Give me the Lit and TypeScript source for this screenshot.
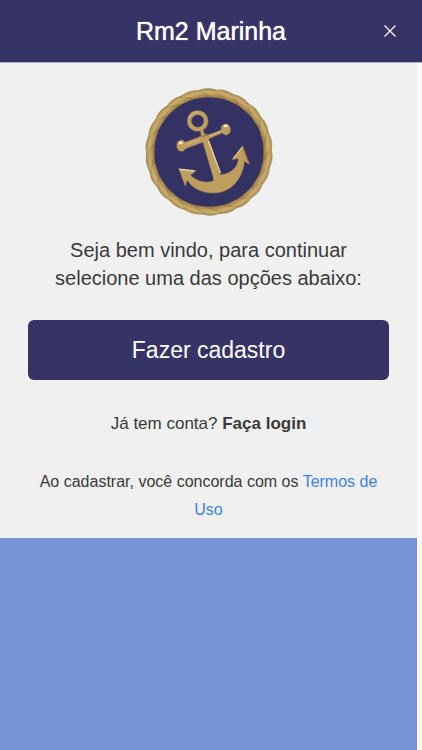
import { LitElement, html, svg, css } from "lit";
import { customElement } from "lit/decorators.js";

const STRAND_COUNT = 22;
const STRANDS = Array.from({ length: STRAND_COUNT }, (_, i) => (i * 360) / STRAND_COUNT);

@customElement("anchor-badge")
class AnchorBadge extends LitElement {
  static styles = css`
    :host {
      display: block;
      width: 128px;
      height: 128px;
    }
    .art {
      display: block;
      width: 100%;
      height: 100%;
    }
  `;

  render() {
    return html`
      <svg class="art" viewBox="20 19 384 384" role="img" aria-label="Âncora">
        <defs>
          <linearGradient id="strand" x1="0" y1="0" x2="0" y2="1">
            <stop offset="0" stop-color="#a88a50" />
            <stop offset="0.4" stop-color="#ccae6e" />
            <stop offset="1" stop-color="#9a7b43" />
          </linearGradient>
        </defs>
        <circle cx="212" cy="211" r="172" fill="#343263" />
        <circle cx="212" cy="211" r="176" fill="none" stroke="#a98a50" stroke-width="23" />
        ${STRANDS.map(
          (angle) => svg`<path transform="rotate(${angle} 212 211)"
            d="M174 31 C188 19 216 18 232 25 C245 31 252 40 258 49 C242 51 218 47 203 39 C191 33 183 31 174 31 Z"
            fill="url(#strand)" stroke="#80632f" stroke-opacity="0.45" stroke-width="2" />`
        )}
        <g fill="#be9e5f" stroke="#544059" stroke-width="2" stroke-linejoin="round">
          <path
            d="M120 260 L175 266 L158 281 C175 298 202 305 224 297 C225 291 224 287 222 281 L193 183
               L141 202 C136 214 119 212 115 198 C111 183 122 171 134 175 L140 181 L188 163 L185 149
               C164 153 146 138 146 118 C146 100 160 86 178 86 C196 86 210 100 210 118
               C210 131 204 140 195 145 L200 157 L212 158 L248 144 C245 130 258 122 269 128
               C283 137 279 159 264 161 C259 162 255 158 252 155 L212 172 L246 278
               C272 277 298 260 299 231 L278 236 L313 191 L335 250 L319 240
               C315 290 278 335 226 335 C188 335 160 318 147 297 L141 317 Z
               M178 100 A18 18 0 1 0 178 136 A18 18 0 1 0 178 100 Z"
            fill-rule="evenodd"
          />
        </g>
        <g fill="none" stroke="#e9d6a4" stroke-linecap="round" stroke-width="3">
          <path d="M211 180 L246 273" stroke-width="4" />
          <path d="M124 263 L167 268" stroke-width="4" />
          <path d="M311 197 L286 230" />
          <path d="M145 188 L184 174" stroke-opacity="0.5" />
          <path d="M216 162 L246 150" stroke-opacity="0.5" />
          <path d="M153 108 C158 96 168 91 178 91" stroke-opacity="0.5" />
        </g>
        <g fill="none" stroke="#927238" stroke-width="3">
          <path d="M191 165 L213 158" />
          <path d="M314 197 L330 241" />
        </g>
        <ellipse cx="127" cy="184" rx="6" ry="4" fill="#fff3d2" />
        <ellipse cx="262" cy="133" rx="6" ry="4" fill="#fff3d2" />
      </svg>
    `;
  }
}

@customElement("app-root")
class AppRoot extends LitElement {
  static styles = css`
    :host {
      display: flex;
      flex-direction: column;
      min-height: 100vh;
      background: #f9f9f9;
      color: #3a3a3a;
      font-family: "Liberation Sans", Arial, sans-serif;
    }
    .bar {
      display: grid;
      grid-template-columns: 48px 1fr 48px;
      align-items: center;
      height: 62px;
      padding: 0 8px;
      background: #363466;
      border-bottom: 1px solid #b3aec8;
      color: #fff;
    }
    .title {
      grid-column: 2;
      margin: 0;
      font-size: 25px;
      line-height: 32px;
      font-weight: 400;
      text-align: center;
      text-shadow: 0 0 1px #fff;
    }
    .close {
      display: grid;
      place-items: center;
      height: 48px;
      padding: 0;
      border: 0;
      background: none;
      color: inherit;
      cursor: pointer;
    }
    .cross {
      width: 14px;
      height: 14px;
    }
    .page {
      display: flex;
      flex: 1;
      flex-direction: column;
      margin-right: 5px;
      background: #7693d4;
    }
    .card {
      display: flex;
      flex-direction: column;
      align-items: center;
      padding: 25px 28px 14px;
      background: #f0f0f0;
      text-align: center;
    }
    .welcome {
      margin: 20px 0 28px;
      font-size: 20px;
      line-height: 28px;
    }
    .signup {
      width: 100%;
      height: 60px;
      border: 0;
      border-radius: 6px;
      background: #363466;
      color: #fff;
      font: inherit;
      font-size: 23px;
      cursor: pointer;
    }
    .login {
      margin: 30px 0;
      font-size: 17px;
      line-height: 28px;
    }
    .strong {
      color: inherit;
      font-weight: 700;
      text-decoration: none;
    }
    .terms {
      margin: 0;
      font-size: 16px;
      line-height: 28px;
    }
    .link {
      color: #4080ea;
      text-decoration: none;
    }
  `;

  render() {
    return html`
      <header class="bar">
        <h1 class="title">Rm2 Marinha</h1>
        <button class="close" aria-label="Fechar">
          <svg class="cross" viewBox="0 0 14 14" fill="none" stroke="currentColor" stroke-width="1.2">
            <path d="M1.5 1.5 L12.5 12.5 M12.5 1.5 L1.5 12.5" />
          </svg>
        </button>
      </header>
      <main class="page">
        <section class="card">
          <anchor-badge></anchor-badge>
          <p class="welcome">Seja bem vindo, para continuar selecione uma das opções abaixo:</p>
          <button class="signup">Fazer cadastro</button>
          <p class="login">Já tem conta? <a class="strong" href="#login">Faça login</a></p>
          <p class="terms">
            Ao cadastrar, você concorda com os <a class="link" href="#termos">Termos de Uso</a>
          </p>
        </section>
      </main>
    `;
  }
}
